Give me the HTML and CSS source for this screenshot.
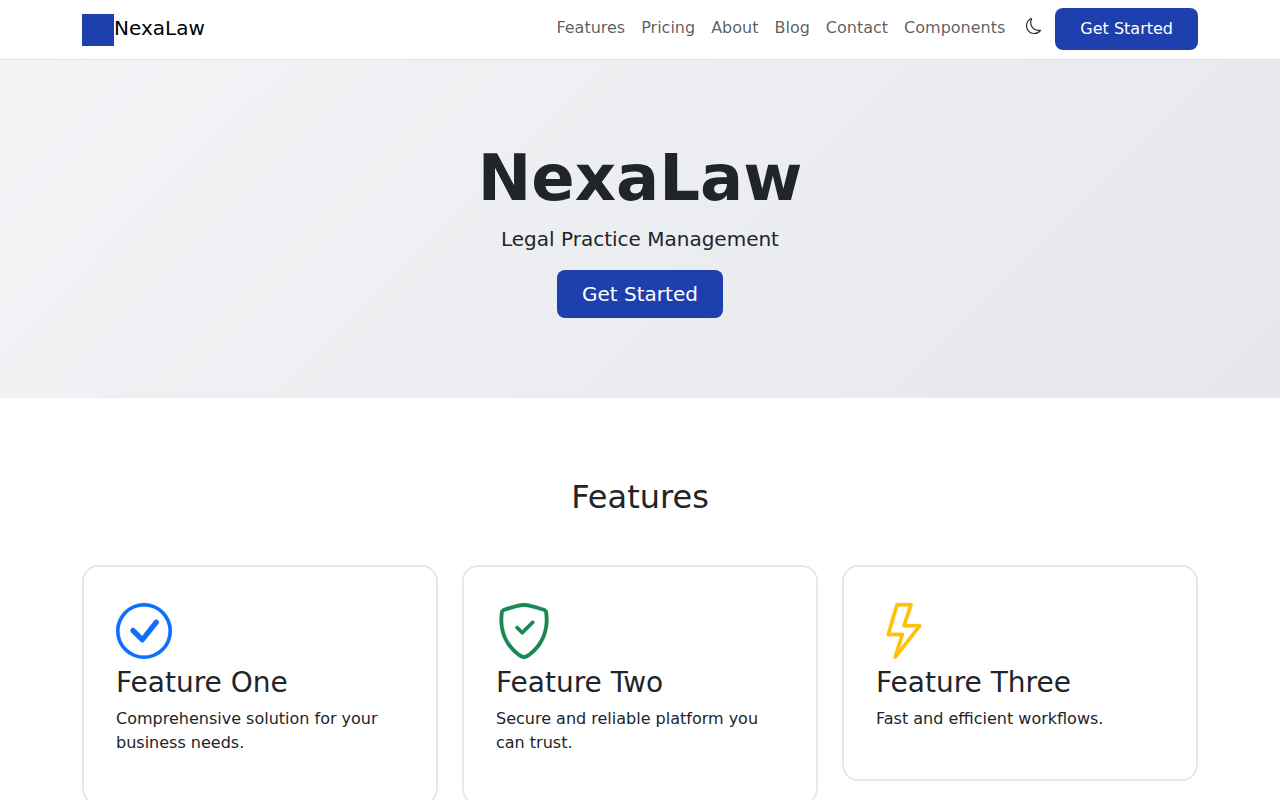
FILE: index.html
```html
<!DOCTYPE html>
<html lang="en">

<head>
    <meta charset="UTF-8">
    <meta name="viewport" content="width=device-width, initial-scale=1.0">
    <title>NexaLaw</title>
    <link rel="stylesheet" href="styles.css">
</head>

<body>
    <nav class="navbar">
        <div class="container nav-inner">
            <a class="brand" href="#">
                <span class="brand-logo"></span>
                <span class="brand-name">NexaLaw</span>
            </a>
            <ul class="nav-links">
                <li><a href="#">Features</a></li>
                <li><a href="#">Pricing</a></li>
                <li><a href="#">About</a></li>
                <li><a href="#">Blog</a></li>
                <li><a href="#">Contact</a></li>
                <li><a href="#">Components</a></li>
            </ul>
            <button class="theme-toggle" aria-label="Toggle theme">
                <svg class="moon" viewBox="0 0 16 16" fill="currentColor">
                    <path d="M6 .278a.77.77 0 0 1 .08.858 7.2 7.2 0 0 0-.878 3.46c0 4.021 3.278 7.277 7.318 7.277q.792-.001 1.533-.16a.79.79 0 0 1 .81.316.73.73 0 0 1-.031.893A8.35 8.35 0 0 1 8.344 16C3.734 16 0 12.286 0 7.71 0 4.266 2.114 1.312 5.124.06A.75.75 0 0 1 6 .278M4.858 1.311A7.27 7.27 0 0 0 1.025 7.71c0 4.02 3.279 7.276 7.319 7.276a7.32 7.32 0 0 0 5.205-2.162q-.506.063-1.029.063c-4.61 0-8.343-3.714-8.343-8.29 0-1.167.242-2.278.681-3.286" />
                </svg>
            </button>
            <a class="btn" href="#">Get Started</a>
        </div>
    </nav>

    <header class="hero">
        <h1>NexaLaw</h1>
        <p class="lead">Legal Practice Management</p>
        <a class="btn btn-lg" href="#">Get Started</a>
    </header>

    <section class="features">
        <div class="container">
            <h2>Features</h2>
            <div class="feature-grid">
                <div class="card">
                    <svg class="icon icon-blue" viewBox="0 0 16 16" fill="currentColor">
                        <path d="M8 15A7 7 0 1 1 8 1a7 7 0 0 1 0 14m0 1A8 8 0 1 0 8 0a8 8 0 0 0 0 16" />
                        <path d="m10.97 4.97-.02.022-3.473 4.425-2.093-2.094a.75.75 0 0 0-1.06 1.06L6.97 11.03a.75.75 0 0 0 1.079-.02l3.992-4.99a.75.75 0 0 0-1.071-1.05" />
                    </svg>
                    <h3>Feature One</h3>
                    <p>Comprehensive solution for your business needs.</p>
                </div>
                <div class="card">
                    <svg class="icon icon-green" viewBox="0 0 16 16" fill="currentColor">
                        <path d="M5.338 1.59a61 61 0 0 0-2.837.856.48.48 0 0 0-.328.39c-.554 4.157.726 7.19 2.253 9.188a10.7 10.7 0 0 0 2.287 2.233c.346.244.652.42.893.533q.18.085.293.118a1 1 0 0 0 .101.025 1 1 0 0 0 .1-.025q.114-.034.294-.118c.24-.113.547-.29.893-.533a10.7 10.7 0 0 0 2.287-2.233c1.527-1.997 2.807-5.031 2.253-9.188a.48.48 0 0 0-.328-.39c-.651-.213-1.75-.56-2.837-.855C9.552 1.29 8.531 1.067 8 1.067c-.53 0-1.552.223-2.662.524zM5.072.56C6.157.265 7.31 0 8 0s1.843.265 2.928.56c1.11.3 2.229.655 2.887.87a1.54 1.54 0 0 1 1.044 1.262c.596 4.477-.787 7.795-2.465 9.99a11.8 11.8 0 0 1-2.517 2.453 7 7 0 0 1-1.048.625c-.28.132-.581.24-.829.24s-.548-.108-.829-.24a7 7 0 0 1-1.048-.625 11.8 11.8 0 0 1-2.517-2.453C1.928 10.487.545 7.169 1.141 2.692A1.54 1.54 0 0 1 2.185 1.43 63 63 0 0 1 5.072.56" />
                        <path d="M10.854 5.146a.5.5 0 0 1 0 .708l-3 3a.5.5 0 0 1-.708 0l-1.5-1.5a.5.5 0 1 1 .708-.708L7.5 7.793l2.646-2.647a.5.5 0 0 1 .708 0" />
                    </svg>
                    <h3>Feature Two</h3>
                    <p>Secure and reliable platform you can trust.</p>
                </div>
                <div class="card">
                    <svg class="icon icon-yellow" viewBox="0 0 16 16" fill="currentColor">
                        <path d="M5.52.359A.5.5 0 0 1 6 0h4a.5.5 0 0 1 .474.658L8.694 6H12.5a.5.5 0 0 1 .395.807l-7 9a.5.5 0 0 1-.873-.454L6.823 9.5H3.5a.5.5 0 0 1-.48-.641zM6.374 1 4.168 8.5H7.5a.5.5 0 0 1 .478.647L6.78 13.04 11.478 7H8a.5.5 0 0 1-.474-.658L9.306 1z" />
                    </svg>
                    <h3>Feature Three</h3>
                    <p>Fast and efficient workflows.</p>
                </div>
            </div>
        </div>
    </section>
</body>

</html>
```

FILE: styles.css
```css
* {
    box-sizing: border-box;
}

body {
    margin: 0;
    font-family: "DejaVu Sans", sans-serif;
    font-size: 16px;
    line-height: 1.5;
    color: #212529;
    background-color: #fff;
}

a {
    text-decoration: none;
}

.container {
    width: 1140px;
    margin: 0 auto;
    padding: 0 12px;
}

.navbar {
    height: 60px;
    border-bottom: 1px solid #dee2e6;
    background-color: #fff;
}

.nav-inner {
    display: flex;
    align-items: flex-start;
    height: 59px;
    padding-top: 8px;
}

.brand {
    display: flex;
    align-items: center;
    margin-top: 5px;
    margin-right: auto;
    font-size: 20px;
    color: #000;
}

.brand-logo {
    width: 32px;
    height: 32px;
    background-color: #1e40af;
}

.brand-name {
    margin-bottom: 4px;
}

.nav-links {
    display: flex;
    list-style: none;
    margin: 0;
    padding: 0;
}

.nav-links a {
    display: block;
    padding: 8px;
    color: rgba(0, 0, 0, .65);
}

.theme-toggle {
    display: flex;
    padding: 0;
    margin: 10px 13px 0;
    border: 0;
    background: none;
    color: #212529;
}

.moon {
    width: 16px;
    height: 16px;
    overflow: visible;
    stroke: currentColor;
    stroke-width: .12;
}

.btn {
    display: inline-block;
    padding: 9px 25px;
    border-radius: 8px;
    background-color: #1e40af;
    color: #fff;
}

.btn-lg {
    padding: 9px 25px;
    font-size: 20px;
}

.hero {
    height: 338px;
    padding-top: 80px;
    text-align: center;
    background: linear-gradient(135deg, #f3f4f6, #e5e7eb);
}

.hero h1 {
    margin: 0 0 7px;
    font-size: 64px;
    font-weight: 700;
    line-height: 1.2;
}

.lead {
    margin: 0 0 16px;
    font-size: 20px;
}

.features {
    padding-top: 80px;
}

.features h2 {
    margin: 0 0 49px;
    font-size: 32px;
    font-weight: 400;
    line-height: 1.2;
    text-align: center;
}

.feature-grid {
    display: grid;
    grid-template-columns: repeat(3, 1fr);
    gap: 24px;
    align-items: start;
}

.card {
    padding: 36px 32px 32px;
    border: 2px solid #e5e7eb;
    border-radius: 16px;
}

.icon {
    display: block;
    width: 56px;
    height: 56px;
    overflow: visible;
    stroke: currentColor;
    stroke-width: .06;
}

.icon-blue {
    color: #0d6efd;
}

.icon-green {
    color: #198754;
}

.icon-yellow {
    color: #ffc107;
}

.card h3 {
    margin: 7px 0;
    font-size: 28px;
    font-weight: 400;
    line-height: 1.2;
}

.card p {
    margin: 0 0 16px;
}
```
